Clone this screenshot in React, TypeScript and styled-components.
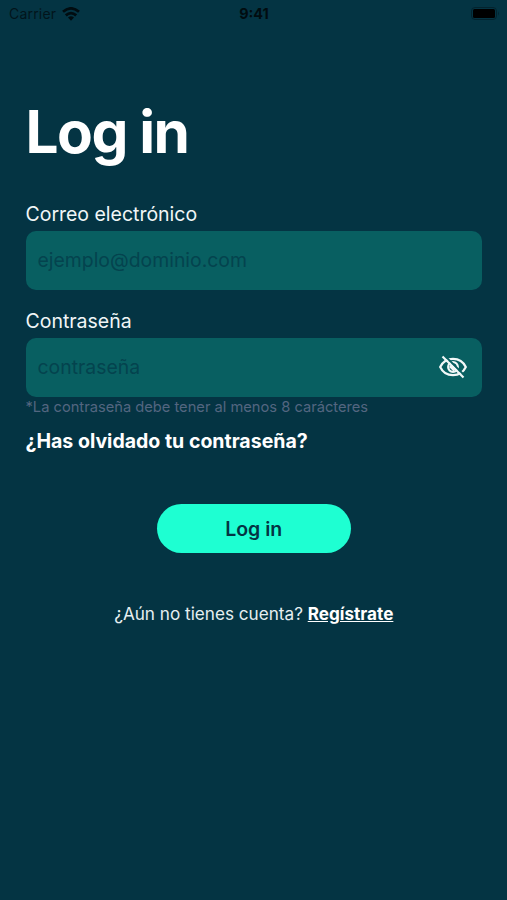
import React from 'react';
import styled, { createGlobalStyle } from 'styled-components';

const Global = createGlobalStyle`
  * { box-sizing: border-box; }
  body { margin: 0; background: #043443; font-family: Inter, sans-serif; }
`;

const Screen = styled.div`
  width: 507px;
  height: 900px;
  overflow: hidden;
  background: #043443;
  color: #fff;
`;

const StatusBar = styled.header`
  height: 27px;
  display: grid;
  grid-template-columns: 1fr auto 1fr;
  align-items: center;
  padding: 0 8px 0 9px;
  color: #02141b;
  font-size: 14px;
  line-height: 27px;
`;

const Carrier = styled.div`
  display: flex;
  align-items: center;
  gap: 6px;
  letter-spacing: 0.2px;
`;

const Time = styled.div`
  font-weight: 700;
  font-size: 14.4px;
  color: #010c10;
`;

const Battery = styled.div`
  display: flex;
  justify-content: flex-end;
`;

const Form = styled.main`
  display: flex;
  flex-direction: column;
  padding: 69px 25px 0 25.5px;
`;

const Title = styled.h1`
  margin: 0;
  height: 72px;
  font-size: 58.5px;
  line-height: 72px;
  font-weight: 700;
  letter-spacing: -1.5px;
`;

const Label = styled.label`
  margin-top: 34px;
  height: 28.5px;
  font-size: 19.5px;
  line-height: 24px;
  letter-spacing: -0.02px;
  color: #f1f6f7;

  & ~ & { margin-top: 19.5px; }
`;

const Field = styled.div`
  height: 59px;
  display: flex;
  align-items: center;
  padding: 0 14px 0 12px;
  border-radius: 10px;
  background: #085f61;
`;

const Input = styled.input`
  flex: 1;
  min-width: 0;
  padding: 0;
  border: 0;
  outline: 0;
  background: none;
  color: #043443;
  font: 400 19.4px Inter, sans-serif;
  &::placeholder { color: #04434e; opacity: 1; }
`;

const Hint = styled.p`
  margin: 0;
  font-size: 14.68px;
  line-height: 20px;
  color: #536680;
`;

const Forgot = styled.a`
  margin-top: 11.5px;
  font-size: 19.55px;
  line-height: 26px;
  font-weight: 700;
`;

const Submit = styled.button`
  align-self: center;
  width: 194px;
  height: 49px;
  margin-top: 50px;
  padding: 0;
  border: 0;
  border-radius: 25px;
  background: #1effd2;
  color: #043443;
  font: 600 19.5px Inter, sans-serif;
`;

const SignUp = styled.p`
  margin: 49px 0 0;
  text-align: center;
  font-size: 17.15px;
  line-height: 24px;
  color: #e6eff1;
`;

const SignUpLink = styled.a`
  color: #fff;
  font-weight: 700;
  text-decoration: underline;
`;

export default function App() {
  return (
    <>
      <Global />
      <Screen>
        <StatusBar>
          <Carrier>
            Carrier
            <svg width="18" height="14" viewBox="0 0 18 14" fill="none" stroke="#010c10" strokeWidth="2.8">
              <path d="M1 4.8Q9 -2 17 4.8M3.8 8.4Q9 3.8 14.2 8.4" />
              <path d="M6 10.6Q9 8 12 10.6L9 13.8Z" fill="#010c10" stroke="none" />
            </svg>
          </Carrier>
          <Time>9:41</Time>
          <Battery>
            <svg width="28" height="13" viewBox="0 0 28 13">
              <rect x=".5" y=".5" width="25" height="12" rx="3.5" fill="none" stroke="#03232e" />
              <rect x="2" y="2" width="22" height="9" rx="1.5" fill="#000" />
              <path d="M27 4.5Q28.5 6.5 27 8.5Z" fill="#03232e" />
            </svg>
          </Battery>
        </StatusBar>
        <Form>
          <Title>Log in</Title>
          <Label htmlFor="email">Correo electrónico</Label>
          <Field>
            <Input id="email" placeholder="ejemplo@dominio.com" />
          </Field>
          <Label htmlFor="password">Contraseña</Label>
          <Field>
            <Input id="password" type="password" placeholder="contraseña" />
            <svg width="30" height="30" viewBox="0 0 30 30" fill="none" stroke="#f2f8f8" strokeWidth="2.2">
              <path d="M2.2 15Q6 6.8 15 6.8T27.8 15Q24 23.2 15 23.2T2.2 15Z" />
              <circle cx="15" cy="15" r="4.8" strokeWidth="2.3" />
              <path d="M12.5 13.5L17 18" strokeWidth="4" />
              <path d="M6.5 3.5L27 24" stroke="#085f61" strokeWidth="2" />
              <path d="M4.5 4.5L25.5 25.5" strokeWidth="2.2" />
            </svg>
          </Field>
          <Hint>*La contraseña debe tener al menos 8 carácteres</Hint>
          <Forgot>¿Has olvidado tu contraseña?</Forgot>
          <Submit>Log in</Submit>
          <SignUp>
            ¿Aún no tienes cuenta? <SignUpLink>Regístrate</SignUpLink>
          </SignUp>
        </Form>
      </Screen>
    </>
  );
}
